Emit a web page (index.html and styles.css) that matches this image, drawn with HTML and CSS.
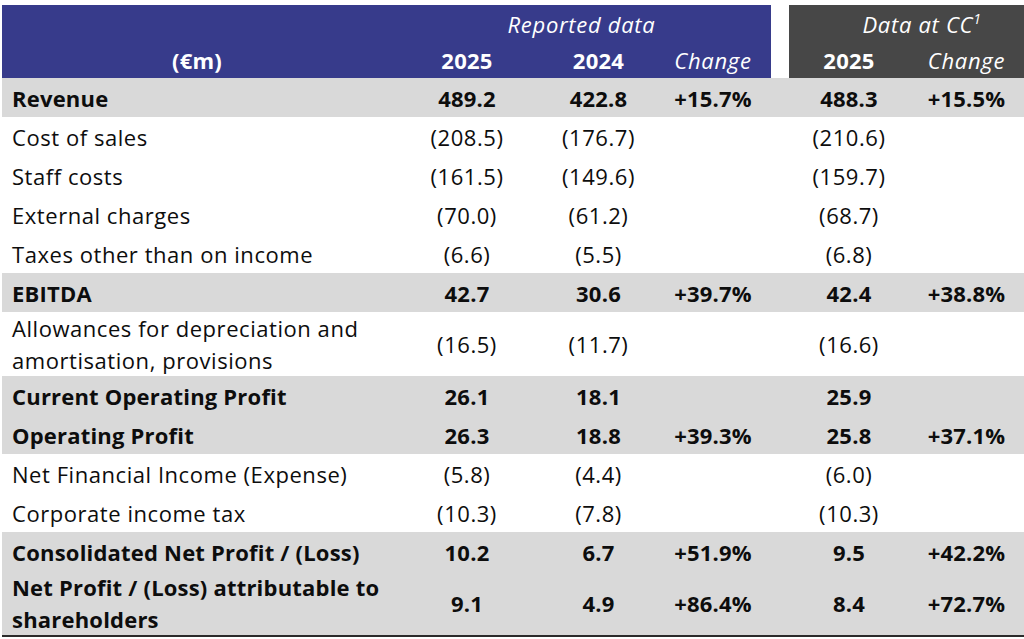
FILE: index.html
```html
<!DOCTYPE html>
<html lang="en">
<head>
<meta charset="utf-8">
<title>Income statement</title>
<link rel="stylesheet" href="styles.css">
</head>
<body>
<table class="fin">
  <colgroup>
    <col class="c-label">
    <col class="c-num1">
    <col class="c-num2">
    <col class="c-num3">
    <col class="c-gap">
    <col class="c-num4">
    <col class="c-num5">
  </colgroup>
  <thead>
    <tr class="h1">
      <th class="blue"></th>
      <th class="blue it" colspan="3">Reported data</th>
      <th class="gap"></th>
      <th class="dark it cc" colspan="2">Data at CC<sup>1</sup></th>
    </tr>
    <tr class="h2">
      <th class="blue">(€m)</th>
      <th class="blue">2025</th>
      <th class="blue">2024</th>
      <th class="blue it">Change</th>
      <th class="gap"></th>
      <th class="dark">2025</th>
      <th class="dark it">Change</th>
    </tr>
  </thead>
  <tbody>
    <tr class="hl b"><td class="lbl">Revenue</td><td>489.2</td><td>422.8</td><td>+15.7%</td><td></td><td>488.3</td><td>+15.5%</td></tr>
    <tr><td class="lbl">Cost of sales</td><td>(208.5)</td><td>(176.7)</td><td></td><td></td><td>(210.6)</td><td></td></tr>
    <tr><td class="lbl">Staff costs</td><td>(161.5)</td><td>(149.6)</td><td></td><td></td><td>(159.7)</td><td></td></tr>
    <tr><td class="lbl">External charges</td><td>(70.0)</td><td>(61.2)</td><td></td><td></td><td>(68.7)</td><td></td></tr>
    <tr><td class="lbl">Taxes other than on income</td><td>(6.6)</td><td>(5.5)</td><td></td><td></td><td>(6.8)</td><td></td></tr>
    <tr class="hl b"><td class="lbl">EBITDA</td><td>42.7</td><td>30.6</td><td>+39.7%</td><td></td><td>42.4</td><td>+38.8%</td></tr>
    <tr><td class="lbl">Allowances for depreciation and<br>amortisation, provisions</td><td>(16.5)</td><td>(11.7)</td><td></td><td></td><td>(16.6)</td><td></td></tr>
    <tr class="hl b"><td class="lbl">Current Operating Profit</td><td>26.1</td><td>18.1</td><td></td><td></td><td>25.9</td><td></td></tr>
    <tr class="hl b"><td class="lbl">Operating Profit</td><td>26.3</td><td>18.8</td><td>+39.3%</td><td></td><td>25.8</td><td>+37.1%</td></tr>
    <tr><td class="lbl">Net Financial Income (Expense)</td><td>(5.8)</td><td>(4.4)</td><td></td><td></td><td>(6.0)</td><td></td></tr>
    <tr><td class="lbl">Corporate income tax</td><td>(10.3)</td><td>(7.8)</td><td></td><td></td><td>(10.3)</td><td></td></tr>
    <tr class="hl b"><td class="lbl">Consolidated Net Profit / (Loss)</td><td>10.2</td><td>6.7</td><td>+51.9%</td><td></td><td>9.5</td><td>+42.2%</td></tr>
    <tr class="hl b last"><td class="lbl">Net Profit / (Loss) attributable to<br>shareholders</td><td>9.1</td><td>4.9</td><td>+86.4%</td><td></td><td>8.4</td><td>+72.7%</td></tr>
  </tbody>
</table>
</body>
</html>
```
FILE: styles.css
```css
html, body {
  margin: 0;
  padding: 0;
  background: #ffffff;
}

body {
  font-family: "Open Sans", "Liberation Sans", sans-serif;
  font-size: 22px;
  letter-spacing: 0.55px;
  color: #0d0d0d;
}

.fin {
  border-collapse: collapse;
  table-layout: fixed;
  width: 1022px;
  margin: 5px 0 0 2px;
}

.c-label { width: 390px; }
.c-num1 { width: 150px; }
.c-num2 { width: 113px; }
.c-num3 { width: 116px; }
.c-gap { width: 18px; }
.c-num4 { width: 120px; }
.c-num5 { width: 115px; }

th, td {
  padding: 0;
  text-align: center;
  vertical-align: middle;
  line-height: 32px;
  white-space: nowrap;
}

th {
  color: #ffffff;
  font-weight: 700;
  letter-spacing: 0.25px;
}

.h1 th { height: 37px; }
.h2 th { height: 36px; }

th.it {
  font-style: italic;
  font-weight: 400;
  letter-spacing: 0.7px;
}

th.blue { background: #373b8b; }
th.dark { background: #474747; }
th.gap { background: #ffffff; }

th.cc { padding-left: 31px; }

sup {
  font-size: 14px;
  line-height: 0;
  vertical-align: 9px;
}

tbody tr { height: 39px; }

tbody tr.hl { background: #d9d9d9; }
tbody tr.b td {
  font-weight: 700;
  letter-spacing: 0.2px;
}

td.lbl {
  text-align: left;
  padding-left: 10px;
}

tbody tr.last td {
  border-bottom: 2px solid #2b2b2b;
}
```
